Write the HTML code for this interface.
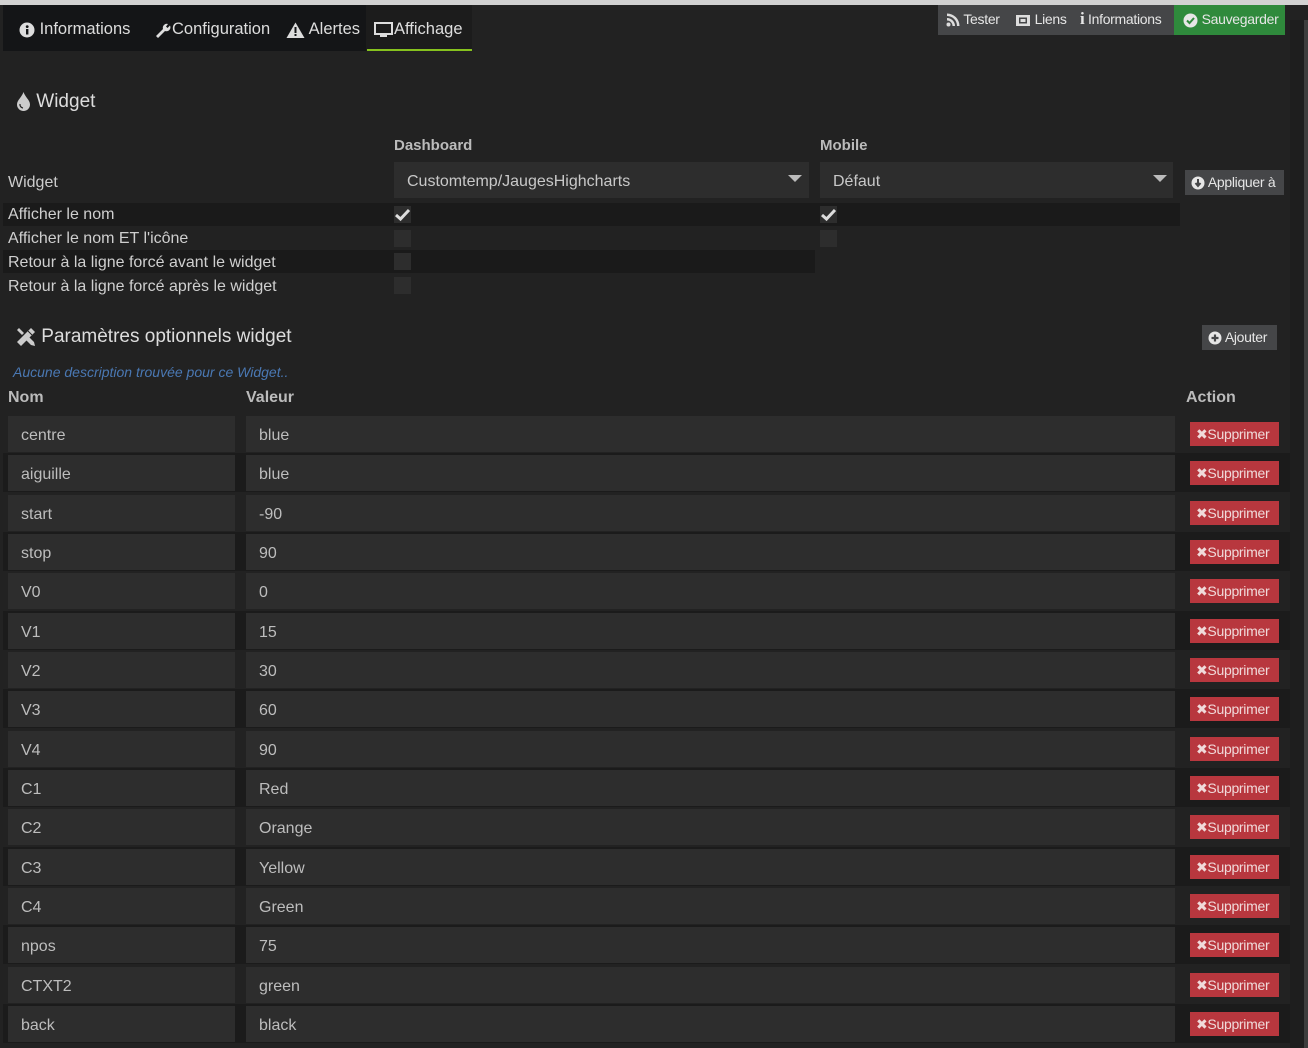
<!DOCTYPE html>
<html><head><meta charset="utf-8">
<style>
*{margin:0;padding:0;box-sizing:border-box}
body{width:1308px;height:1048px;background:#222;position:relative;overflow:hidden;font-family:"Liberation Sans",sans-serif;color:#cfcfcf;font-size:16px}
.a{position:absolute}
.tab{position:absolute;top:7px;height:44px;line-height:44px;font-size:16.5px;color:#ddd}
.btn{position:absolute;height:24px;line-height:24px;font-size:14px;color:#e6e6e6;padding:0 6px;letter-spacing:-0.3px}
.row{position:absolute;left:3px;width:1287px;height:39px}
.in{position:absolute;top:2px;height:36px;line-height:40px;background:#2d2d2d;color:#bdbdbd;font-size:16px;padding-left:13px}
.del{position:absolute;left:1187px;top:8px;width:89px;height:24px;line-height:24px;background:#b8373e;color:#f0dada;font-size:14px;padding-left:6px;letter-spacing:-0.3px}
.cb{position:absolute;width:17px;height:17px;background:#2d2d2d}
svg{vertical-align:middle}
</style></head><body>
<div class="a" style="left:0;top:0;width:1308px;height:5px;background:#d2d2d2"></div>
<div class="a" style="left:3px;top:5px;width:363px;height:46px;background:#141517"></div>
<div class="a" style="left:366px;top:5px;width:106px;height:46px;background:#1c1c1c"></div>
<div class="a" style="left:367px;top:49px;width:105px;height:2px;background:#86c21e"></div>
<div class="tab" style="left:19px"><svg width="16" height="16" viewBox="0 0 16 16"><circle cx="8" cy="8" r="7.5" fill="#ddd"/><rect x="7" y="7" width="2.4" height="5.5" fill="#141517"/><circle cx="8.2" cy="4.6" r="1.4" fill="#141517"/></svg> Informations</div>
<div class="tab" style="left:154px"><svg width="18" height="16" viewBox="0 0 18 16"><path d="M2 14 L9 7 A4 4 0 0 1 14 2 L12 4.5 L13.5 6 L16 3.5 A4 4 0 0 1 11 9 L4 16 Z" fill="#ddd"/></svg>Configuration</div>
<div class="tab" style="left:286px"><svg width="19" height="16" viewBox="0 0 19 16"><path d="M9.5 0.5 L18.5 16 H0.5 Z" fill="#ddd"/><rect x="8.5" y="5" width="2" height="6" fill="#141517"/><rect x="8.5" y="12" width="2" height="2" fill="#141517"/></svg> Alertes</div>
<div class="tab" style="left:374px"><svg width="20" height="16" viewBox="0 0 20 16"><rect x="1" y="1" width="17" height="11" fill="none" stroke="#ddd" stroke-width="2"/><rect x="6" y="13" width="7" height="2" fill="#ddd"/></svg>Affichage</div>

<div class="a" style="left:938px;top:5px;width:236px;height:30px;background:#454648"></div>
<div class="a" style="left:1174px;top:5px;width:111px;height:30px;background:#2f8a3c"></div>
<div class="btn" style="left:940px;top:7px"><svg width="14" height="14" viewBox="0 0 14 14"><circle cx="2.5" cy="11.5" r="2" fill="#ddd"/><path d="M1 5 A8 8 0 0 1 9 13 H6.5 A5.5 5.5 0 0 0 1 7.5Z M1 0.5 A12.5 12.5 0 0 1 13.5 13 H11 A10 10 0 0 0 1 3Z" fill="#ddd"/></svg> Tester</div>
<div class="btn" style="left:1009px;top:7px"><svg width="16" height="13" viewBox="0 0 16 13"><rect x="1" y="1" width="14" height="11" fill="#ddd"/><rect x="4" y="3.5" width="8" height="6" fill="#454648"/><rect x="5.5" y="5" width="5" height="3" fill="#ddd"/></svg> Liens</div>
<div class="btn" style="left:1074px;top:7px"><b style="font-family:'Liberation Serif',serif;font-size:17px">i</b> Informations</div>
<div class="btn" style="left:1177px;top:7px"><svg width="15" height="15" viewBox="0 0 15 15"><circle cx="7.5" cy="7.5" r="7" fill="#e6e6e6"/><path d="M4 7.5 L6.5 10 L11 5" stroke="#2f8a3c" stroke-width="2" fill="none"/></svg> Sauvegarder</div>
<div class="a" style="left:1290px;top:20px;width:14px;height:1028px;background:#1e1e1e"></div>
<div class="a" style="left:1304px;top:20px;width:4px;height:1028px;background:#3d3d3d"></div>

<div class="a" style="left:16px;top:91px;font-size:19px;color:#ddd"><svg width="15" height="19" viewBox="0 0 15 19"><path d="M7.5 0 C9 5 14 8 14 12.5 A6.5 6.5 0 0 1 1 12.5 C1 8 6 5 7.5 0Z" fill="#ccc"/><path d="M4 12 A3.5 3.5 0 0 0 7 16" stroke="#222" stroke-width="1.3" fill="none"/></svg> Widget</div>

<div class="a" style="left:394px;top:137px;font-weight:bold;font-size:15px;color:#bbb">Dashboard</div>
<div class="a" style="left:820px;top:137px;font-weight:bold;font-size:15px;color:#bbb">Mobile</div>
<div class="a" style="left:8px;top:174px;color:#ccc">Widget</div>
<div class="a in" style="left:394px;top:162px;width:415px;color:#c8c8c8">Customtemp/JaugesHighcharts</div>
<div class="a" style="left:788px;top:175px;width:0;height:0;border-left:7px solid transparent;border-right:7px solid transparent;border-top:7px solid #bbb"></div>
<div class="a in" style="left:820px;top:162px;width:353px;color:#c8c8c8">Défaut</div>
<div class="a" style="left:1153px;top:175px;width:0;height:0;border-left:7px solid transparent;border-right:7px solid transparent;border-top:7px solid #bbb"></div>
<div class="btn" style="left:1185px;top:170px;background:#454648;height:25px;line-height:25px;width:99px"><svg width="14" height="14" viewBox="0 0 14 14"><circle cx="7" cy="7" r="6.5" fill="#e6e6e6"/><path d="M7 3 V9 M4.5 7 L7 10 L9.5 7" stroke="#454648" stroke-width="2" fill="none"/></svg> Appliquer à</div>

<div class="a" style="left:3px;top:203px;width:1177px;height:23px;background:#1a1a1a"></div>
<div class="a" style="left:3px;top:250px;width:812px;height:23px;background:#1a1a1a"></div>
<div class="a" style="left:8px;top:206px">Afficher le nom</div>
<div class="a" style="left:8px;top:230px">Afficher le nom ET l'icône</div>
<div class="a" style="left:8px;top:254px">Retour à la ligne forcé avant le widget</div>
<div class="a" style="left:8px;top:278px">Retour à la ligne forcé après le widget</div>
<div class="cb" style="left:394px;top:206px"><svg width="17" height="17" viewBox="0 0 17 17"><path d="M2 9 L6.5 13 L15 4" stroke="#ddd" stroke-width="3" fill="none"/></svg></div>
<div class="cb" style="left:820px;top:206px"><svg width="17" height="17" viewBox="0 0 17 17"><path d="M2 9 L6.5 13 L15 4" stroke="#ddd" stroke-width="3" fill="none"/></svg></div>
<div class="cb" style="left:394px;top:230px"></div>
<div class="cb" style="left:820px;top:230px"></div>
<div class="cb" style="left:394px;top:253px"></div>
<div class="cb" style="left:394px;top:277px"></div>

<div class="a" style="left:16px;top:326px;font-size:19px;color:#ddd"><svg width="20" height="20" viewBox="0 0 20 20"><path d="M3 1 L8 6 L6 8 L1 3Z M11 8 L18 15 L19 19 L15 18 L8 11Z" fill="#ccc"/><path d="M15 1 L19 5 L5 19 L1 15Z" fill="#ccc"/><path d="M12 4 L16 8" stroke="#222" stroke-width="1"/></svg> Paramètres optionnels widget</div>
<div class="btn" style="left:1202px;top:325px;background:#454648;height:25px;line-height:25px;width:75px"><svg width="14" height="14" viewBox="0 0 14 14"><circle cx="7" cy="7" r="6.5" fill="#e6e6e6"/><path d="M7 3.5 V10.5 M3.5 7 H10.5" stroke="#454648" stroke-width="2.2"/></svg> Ajouter</div>
<div class="a" style="left:13px;top:364px;font-size:14px;font-style:italic;color:#4a78b3">Aucune description trouvée pour ce Widget..</div>
<div class="a" style="left:8px;top:389px;font-weight:bold;color:#bbb">Nom</div>
<div class="a" style="left:246px;top:389px;font-weight:bold;color:#bbb">Valeur</div>
<div class="a" style="left:1186px;top:389px;font-weight:bold;color:#bbb">Action</div>

<div class="row" style="top:414px"><div class="in" style="left:5px;width:227px">centre</div><div class="in" style="left:243px;width:929px">blue</div><div class="del">✖Supprimer</div></div>
<div class="row" style="top:453px;background:#1b1b1b"><div class="in" style="left:5px;width:227px">aiguille</div><div class="in" style="left:243px;width:929px">blue</div><div class="del">✖Supprimer</div></div>
<div class="row" style="top:493px"><div class="in" style="left:5px;width:227px">start</div><div class="in" style="left:243px;width:929px">-90</div><div class="del">✖Supprimer</div></div>
<div class="row" style="top:532px;background:#1b1b1b"><div class="in" style="left:5px;width:227px">stop</div><div class="in" style="left:243px;width:929px">90</div><div class="del">✖Supprimer</div></div>
<div class="row" style="top:571px"><div class="in" style="left:5px;width:227px">V0</div><div class="in" style="left:243px;width:929px">0</div><div class="del">✖Supprimer</div></div>
<div class="row" style="top:611px;background:#1b1b1b"><div class="in" style="left:5px;width:227px">V1</div><div class="in" style="left:243px;width:929px">15</div><div class="del">✖Supprimer</div></div>
<div class="row" style="top:650px"><div class="in" style="left:5px;width:227px">V2</div><div class="in" style="left:243px;width:929px">30</div><div class="del">✖Supprimer</div></div>
<div class="row" style="top:689px;background:#1b1b1b"><div class="in" style="left:5px;width:227px">V3</div><div class="in" style="left:243px;width:929px">60</div><div class="del">✖Supprimer</div></div>
<div class="row" style="top:729px"><div class="in" style="left:5px;width:227px">V4</div><div class="in" style="left:243px;width:929px">90</div><div class="del">✖Supprimer</div></div>
<div class="row" style="top:768px;background:#1b1b1b"><div class="in" style="left:5px;width:227px">C1</div><div class="in" style="left:243px;width:929px">Red</div><div class="del">✖Supprimer</div></div>
<div class="row" style="top:807px"><div class="in" style="left:5px;width:227px">C2</div><div class="in" style="left:243px;width:929px">Orange</div><div class="del">✖Supprimer</div></div>
<div class="row" style="top:847px;background:#1b1b1b"><div class="in" style="left:5px;width:227px">C3</div><div class="in" style="left:243px;width:929px">Yellow</div><div class="del">✖Supprimer</div></div>
<div class="row" style="top:886px"><div class="in" style="left:5px;width:227px">C4</div><div class="in" style="left:243px;width:929px">Green</div><div class="del">✖Supprimer</div></div>
<div class="row" style="top:925px;background:#1b1b1b"><div class="in" style="left:5px;width:227px">npos</div><div class="in" style="left:243px;width:929px">75</div><div class="del">✖Supprimer</div></div>
<div class="row" style="top:965px"><div class="in" style="left:5px;width:227px">CTXT2</div><div class="in" style="left:243px;width:929px">green</div><div class="del">✖Supprimer</div></div>
<div class="row" style="top:1004px;background:#1b1b1b"><div class="in" style="left:5px;width:227px">back</div><div class="in" style="left:243px;width:929px">black</div><div class="del">✖Supprimer</div></div>
</body></html>
